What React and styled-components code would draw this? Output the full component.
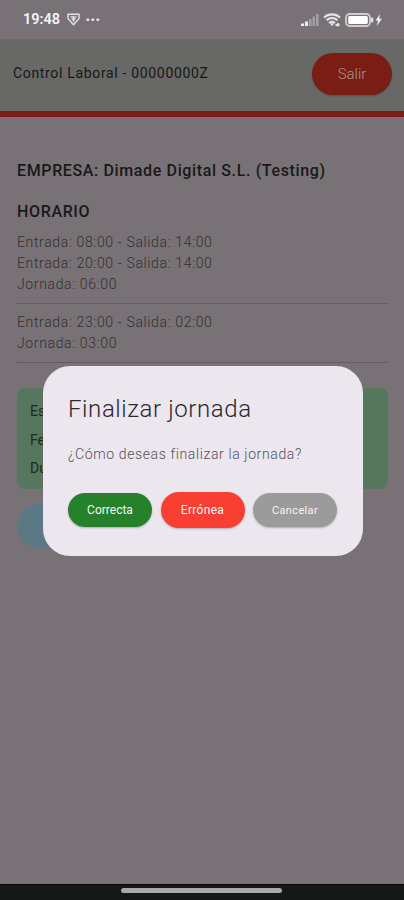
import styled, { createGlobalStyle } from "styled-components";

function App() {
  return (
    <>
      <GlobalStyle />
      <Screen>
        <StatusBar>
          <StatusLeft>
            <Clock>19:48</Clock>
            <ShieldIcon />
            <DotsIcon />
          </StatusLeft>
          <StatusRight>
            <SignalIcon />
            <WifiIcon />
            <BatteryIcon />
          </StatusRight>
        </StatusBar>

        <Header>
          <HeaderTitle>Control Laboral - 00000000Z</HeaderTitle>
          <ExitButton>Salir</ExitButton>
        </Header>

        <Content>
          <Company>EMPRESA: Dimade Digital S.L. (Testing)</Company>
          <Subtitle>HORARIO</Subtitle>
          <Shift>
            <Line>Entrada: 08:00 - Salida: 14:00</Line>
            <Line>Entrada: 20:00 - Salida: 14:00</Line>
            <Line>Jornada: 06:00</Line>
          </Shift>
          <Shift>
            <Line>Entrada: 23:00 - Salida: 02:00</Line>
            <Line>Jornada: 03:00</Line>
          </Shift>
          <StateCard>
            <StateLine>Es</StateLine>
            <StateLine>Fe</StateLine>
            <StateLine>Du</StateLine>
          </StateCard>
          <StateButton />
        </Content>

        <NavBar>
          <NavHandle />
        </NavBar>

        <Dialog role="dialog">
          <DialogTitle>Finalizar jornada</DialogTitle>
          <DialogText>¿Cómo deseas finalizar la jornada?</DialogText>
          <Actions>
            <Action $color="#26822a">Correcta</Action>
            <Action $color="#f83f32" $spacing="0.3px" $tall>
              Errónea
            </Action>
            <Action $color="#9b9b9b" $size="11px" $spacing="0.35px">
              Cancelar
            </Action>
          </Actions>
        </Dialog>
      </Screen>
    </>
  );
}

const ShieldIcon = () => (
  <svg width="13" height="13" viewBox="0 0 13 13" fill="none" stroke="#e6e3e6">
    <path d="M1 1.200h11v4.400L6.500 11.800 1 5.600z" strokeWidth="1.400" strokeLinejoin="round" />
    <path d="M3.500 3.900h6M4.500 6h4M6.500 3.500v5.500" strokeWidth="1.400" />
  </svg>
);

const DotsIcon = () => (
  <svg width="14" height="4" viewBox="0 0 14 4" fill="#e6e3e6">
    <rect x="0.300" y="0.500" width="3" height="2.500" rx="1" />
    <rect x="5.300" y="0.500" width="3" height="2.500" rx="1" />
    <rect x="10.300" y="0.500" width="3" height="2.500" rx="1" />
  </svg>
);

const SignalIcon = () => (
  <svg width="18" height="12" viewBox="0 0 18 12">
    <path d="M0 9.500h3V12H0zM4 7.500h3V12H4z" fill="#eeebee" />
    <path d="M8 5h2.600v7H8zM11.500 2.500H14V12h-2.500zM15 0h2.600v12H15z" fill="#a39fa3" />
  </svg>
);

const WifiIcon = () => (
  <svg width="18" height="14" viewBox="0 0 18 14" fill="none" stroke="#e6e3e6">
    <path
      d="M1 4.500c4.600-4.200 11.400-4.200 16 0M3.600 7.300c3.200-2.900 7.600-2.900 10.800 0M6 10c1.800-1.600 4.200-1.600 6 0"
      strokeWidth="2.100"
    />
    <path d="M6.800 10.300h4.400L9 13.200z" fill="#e6e3e6" stroke="none" />
    <path d="M12.500 12h4M15 10v3.500" strokeWidth="1.800" />
  </svg>
);

const BatteryIcon = () => (
  <svg width="38" height="14" viewBox="0 0 38 14">
    <rect x="1" y="1" width="24" height="12" rx="3.500" fill="none" stroke="#cfccd0" strokeWidth="1.800" />
    <rect x="3.200" y="3" width="19.600" height="8" rx="1.500" fill="#fff" />
    <path d="M26 4.700h2.200v4.600H26z" fill="#e6e3e6" />
    <path d="M35 1l-4.400 6.600h2.500L31.800 13l5-7.200h-2.600z" fill="#f2f0f2" />
  </svg>
);

export default App;

const GlobalStyle = createGlobalStyle`
  * {
    box-sizing: border-box;
  }

  body {
    margin: 0;
    font-family: Roboto, sans-serif;
  }
`;

const Screen = styled.div`
  position: relative;
  display: flex;
  flex-direction: column;
  height: 900px;
  overflow: hidden;
  background-color: #787276;
`;

const StatusBar = styled.div`
  height: 39px;
  padding: 0 21px 0 23px;
  display: flex;
  flex-shrink: 0;
  justify-content: space-between;
  align-items: center;
`;

const StatusLeft = styled.div`
  display: flex;
  align-items: center;
  gap: 6px;
`;

const StatusRight = styled.div`
  display: flex;
  align-items: center;
  gap: 4px;
`;

const Clock = styled.span`
  font-size: 14.5px;
  font-weight: 600;
  color: #f6f4f6;
  width: 38px;
  line-height: 18px;
`;

const Header = styled.header`
  height: 78px;
  flex-shrink: 0;
  padding: 0 12px 6px 13px;
  display: flex;
  justify-content: space-between;
  align-items: center;
  background-color: #686867;
  border-bottom: 6px solid #7a1d15;
`;

const HeaderTitle = styled.h1`
  margin: 0 0 -2px;
  font-size: 14px;
  font-weight: 400;
  letter-spacing: 0.67px;
  color: #171717;
`;

const ExitButton = styled.button`
  width: 80px;
  height: 42px;
  margin-top: 4px;
  border: 0;
  border-radius: 21px;
  background-color: #7a1d15;
  color: #a99492;
  font-family: inherit;
  font-size: 15px;
  font-weight: 300;
  box-shadow: 0 1px 2px rgba(0, 0, 0, 0.2);
`;

const Content = styled.main`
  flex: 1;
  padding: 43px 16px 0 17px;
`;

const Company = styled.h2`
  margin: 0;
  font-size: 16px;
  line-height: 22px;
  font-weight: 500;
  letter-spacing: 0.63px;
  color: #1a181a;
`;

const Subtitle = styled.h3`
  margin: 19px 0 9px;
  font-size: 16px;
  line-height: 22px;
  font-weight: 500;
  letter-spacing: 0.65px;
  color: #1a181a;
`;

const Shift = styled.div`
  padding-bottom: 8px;
  margin-bottom: 8px;
  border-bottom: 1px solid #625d60;
`;

const Line = styled.p`
  margin: 0;
  font-size: 14px;
  line-height: 21px;
  font-weight: 300;
  letter-spacing: 0.64px;
  color: #322e31;
`;

const StateCard = styled.div`
  margin-top: 25px;
  height: 101px;
  padding: 9px 13px;
  border-radius: 8px;
  background-color: #56765d;
`;

const StateLine = styled.p`
  margin: 0;
  font-size: 14px;
  line-height: 28.500px;
  font-weight: 400;
  color: #1d2b20;
`;

const StateButton = styled.button`
  display: block;
  width: 120px;
  height: 44px;
  margin-top: 15px;
  border: 0;
  border-radius: 22px;
  background-color: #5b7984;
`;

const NavBar = styled.div`
  height: 16px;
  padding-top: 4px;
  display: flex;
  flex-shrink: 0;
  justify-content: center;
  align-items: flex-start;
  background-color: #161817;
  border-top: 1px solid #050505;
`;

const NavHandle = styled.div`
  width: 161px;
  height: 5px;
  margin: -1px 2px 0 0;
  border-radius: 3px;
  background-color: #aaa9a9;
`;

const Dialog = styled.div`
  position: absolute;
  top: 366px;
  left: 43px;
  width: 320px;
  height: 190px;
  padding: 28px 25px 0;
  border-radius: 27px;
  background-color: #ece6ee;
`;

const DialogTitle = styled.h2`
  margin: 0;
  font-size: 24px;
  line-height: 30px;
  font-weight: 300;
  letter-spacing: 0.6px;
  color: #2a282d;
`;

const DialogText = styled.p`
  margin: 19px 0 0;
  font-size: 14px;
  line-height: 22px;
  font-weight: 300;
  letter-spacing: 0.62px;
  color: #56515a;
`;

const Actions = styled.div`
  display: flex;
  align-items: center;
  gap: 8.5px;
  height: 36px;
  margin-top: 27px;
`;

const Action = styled.button`
  width: 84px;
  height: ${(props) => (props.$tall ? "36px" : "34px")};
  padding: 0;
  border: 0;
  border-radius: 18px;
  background-color: ${(props) => props.$color};
  color: #f5f5f5;
  font-family: inherit;
  font-size: ${(props) => props.$size || "12px"};
  font-weight: 400;
  letter-spacing: ${(props) => props.$spacing || "0"};
  box-shadow: 0 1px 2px rgba(0, 0, 0, 0.25);
`;
